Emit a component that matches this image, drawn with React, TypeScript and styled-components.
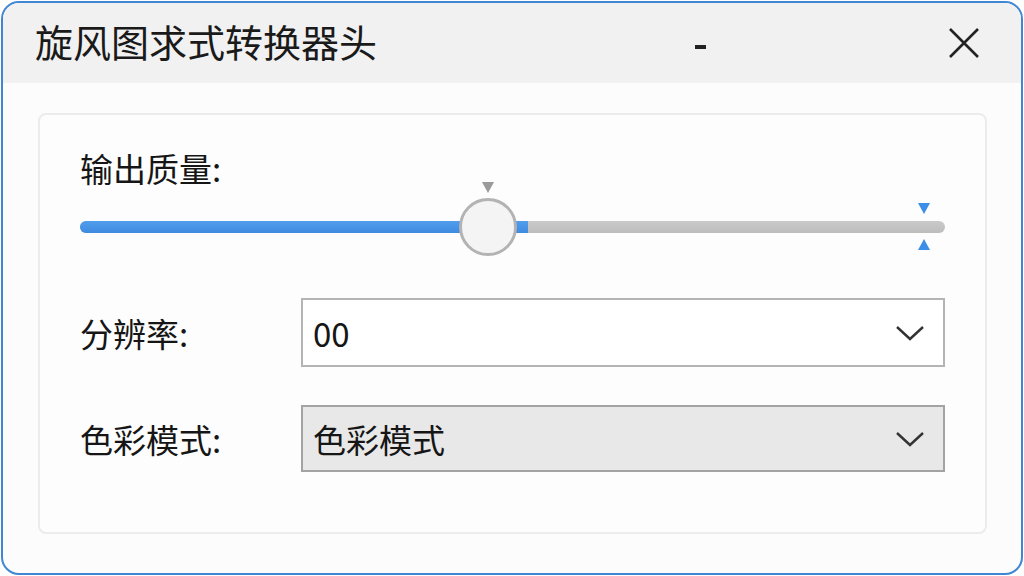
import React from "react";
import styled, { createGlobalStyle } from "styled-components";

const Global = createGlobalStyle`
  html, body {
    margin: 0;
    padding: 0;
    background: #ffffff;
    width: 1024px;
    height: 576px;
    overflow: hidden;
  }
  body {
    font-family: "Noto Sans CJK SC", "Noto Sans", sans-serif;
  }
`;

const Window = styled.div`
  box-sizing: border-box;
  margin: 1px;
  width: 1022px;
  height: 574px;
  border: 2px solid #3f86d4;
  border-radius: 18px;
  background: #fcfcfc;
  overflow: hidden;
  display: flex;
  flex-direction: column;
`;

const TitleBar = styled.div`
  height: 80px;
  background: #f1f1f1;
  display: flex;
  align-items: center;
  padding: 0 0 0 32px;
  flex-shrink: 0;
`;

const Title = styled.div`
  font-size: 38px;
  color: #1a1a1a;
  flex: 1;
  line-height: 1;
  padding-bottom: 4px;
`;

const MinButton = styled.div`
  width: 11px;
  height: 4px;
  background: #222;
  margin-right: 241px;
  margin-top: 8px;
`;

const CloseButton = styled.div`
  width: 34px;
  height: 34px;
  margin-right: 40px;
  display: flex;
  align-items: center;
  justify-content: center;
`;

const Body = styled.div`
  flex: 1;
  padding: 30px 34px 39px 35px;
  display: flex;
`;

const Panel = styled.div`
  flex: 1;
  border: 2px solid #ececec;
  border-radius: 8px;
  background: #fdfdfd;
  padding: 35px 40px 0 40px;
  display: flex;
  flex-direction: column;
`;

const Label = styled.div`
  font-size: 33px;
  color: #161616;
  line-height: 36px;
`;

const SliderWrap = styled.div`
  position: relative;
  height: 60px;
  margin-top: 11px;
`;

const Track = styled.div`
  position: absolute;
  left: 0;
  right: 0;
  top: 24px;
  height: 12px;
  border-radius: 6px;
  background: linear-gradient(#cacaca, #bdbdbd);
`;

const Fill = styled.div`
  position: absolute;
  left: 0;
  top: 24px;
  height: 12px;
  border-radius: 6px 0 0 6px;
  background: linear-gradient(#509dec, #3f8be0);
`;

const Thumb = styled.div`
  box-sizing: border-box;
  position: absolute;
  top: 1px;
  width: 58px;
  height: 58px;
  margin-left: -29px;
  border-radius: 50%;
  border: 3px solid #b3b3b3;
  background: #f4f4f4;
`;

const Tri = styled.div<{ $dir: "down" | "up"; $color: string }>`
  position: absolute;
  width: 0;
  height: 0;
  border-left: 6px solid transparent;
  border-right: 6px solid transparent;
  ${(p) =>
    p.$dir === "down"
      ? `border-top: 11px solid ${p.$color};`
      : `border-bottom: 11px solid ${p.$color};`}
  margin-left: -6px;
`;

const Row = styled.div<{ $gap: number }>`
  display: flex;
  align-items: center;
  margin-top: ${(p) => p.$gap}px;
`;

const RowLabel = styled(Label)`
  width: 221px;
  flex-shrink: 0;
`;

const Select = styled.div<{ $muted?: boolean }>`
  box-sizing: border-box;
  flex: 1;
  height: ${(p) => (p.$muted ? 67 : 69)}px;
  border: 2px solid ${(p) => (p.$muted ? "#a3a3a3" : "#b4b4b4")};
  background: ${(p) => (p.$muted ? "#e8e8e8" : "#ffffff")};
  display: flex;
  align-items: center;
  padding: 0 18px 0 10px;
  font-size: 33px;
  color: #161616;
`;

const SelectText = styled.span`
  flex: 1;
`;

const Chevron = () => (
  <svg width="30" height="18" viewBox="0 0 30 18">
    <path d="M2 3 L15 15 L28 3" fill="none" stroke="#333" strokeWidth="2.4" />
  </svg>
);

export default function App() {
  const pct = 0.4716;
  return (
    <>
      <Global />
      <Window>
        <TitleBar>
          <Title>旋风图求式转换器头</Title>
          <MinButton />
          <CloseButton>
            <svg width="32" height="32" viewBox="0 0 32 32">
              <path
                d="M2 2 L30 30 M30 2 L2 30"
                stroke="#222"
                strokeWidth="2.6"
                fill="none"
              />
            </svg>
          </CloseButton>
        </TitleBar>
        <Body>
          <Panel>
            <Label>输出质量:</Label>
            <SliderWrap>
              <Track />
              <Fill style={{ width: `calc(${pct * 100}% + 40px)` }} />
              <Tri $dir="down" $color="#9a9a9a" style={{ left: `${pct * 100}%`, top: "-15px" }} />
              <Thumb style={{ left: `${pct * 100}%` }} />
              <Tri $dir="down" $color="#3d8ee6" style={{ left: "calc(100% - 21px)", top: "6px" }} />
              <Tri $dir="up" $color="#3d8ee6" style={{ left: "calc(100% - 21px)", top: "42px" }} />
            </SliderWrap>
            <Row $gap={41}>
              <RowLabel>分辨率:</RowLabel>
              <Select>
                <SelectText>00</SelectText>
                <Chevron />
              </Select>
            </Row>
            <Row $gap={38}>
              <RowLabel>色彩模式:</RowLabel>
              <Select $muted>
                <SelectText>色彩模式</SelectText>
                <Chevron />
              </Select>
            </Row>
          </Panel>
        </Body>
      </Window>
    </>
  );
}
